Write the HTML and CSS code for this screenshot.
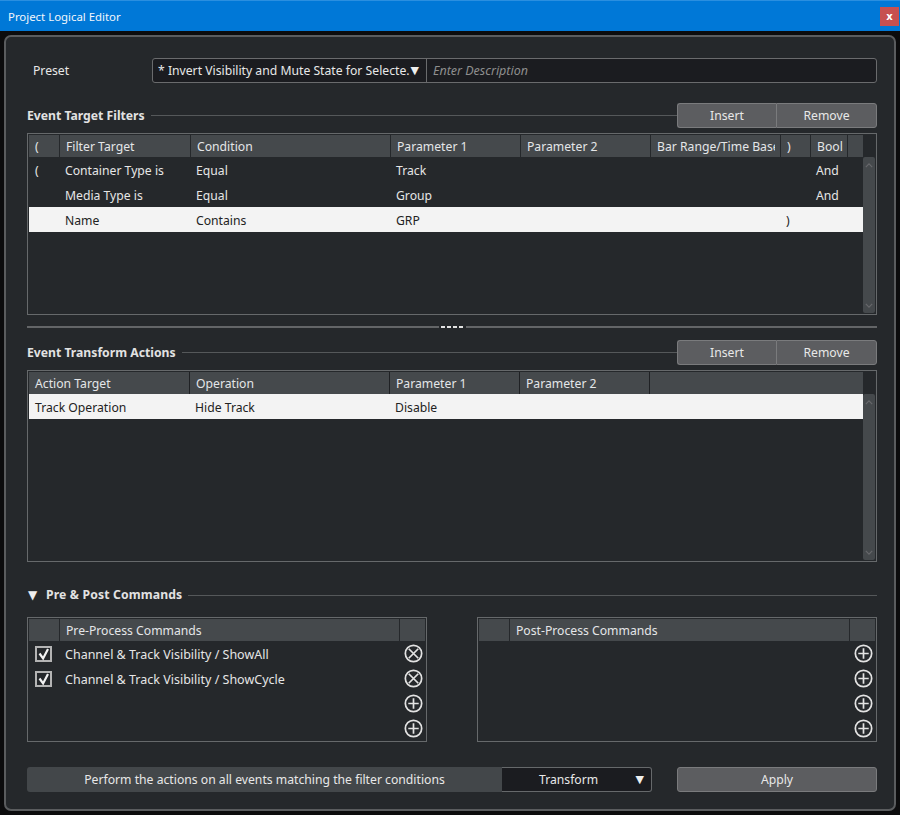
FILE: index.html
```html
<!DOCTYPE html>
<html lang="en">
<head>
<meta charset="utf-8">
<title>Project Logical Editor</title>
<link rel="stylesheet" href="styles.css">
</head>
<body>
<svg class="defs" width="0" height="0" aria-hidden="true">
  <symbol id="i-add" viewBox="0 0 20 20"><circle cx="10" cy="10" r="8.6" fill="none" stroke="currentColor" stroke-width="1.8"/><path d="M10 4.5v11M4.5 10h11" fill="none" stroke="currentColor" stroke-width="1.8"/></symbol>
  <symbol id="i-del" viewBox="0 0 20 20"><circle cx="10" cy="10" r="8.6" fill="none" stroke="currentColor" stroke-width="1.8"/><path d="M5 5l10 10M15 5L5 15" fill="none" stroke="currentColor" stroke-width="1.8"/></symbol>
  <symbol id="i-check" viewBox="0 0 17 16"><rect x="1" y="1" width="15" height="14" fill="none" stroke="#b4b4b4" stroke-width="2"/><path d="M4.5 7.5l3.6 5L13 3" fill="none" stroke="#f2f2f2" stroke-width="2.2"/></symbol>
</svg>
<header class="titlebar">
  <span class="title">Project Logical Editor</span>
  <button class="close">x</button>
</header>
<main class="panel">
  <div class="preset">
    <span class="preset-label">Preset</span>
    <div class="field">
      <div class="combo"><span>* Invert Visibility and Mute State for Selecte.</span><span class="arrow">▼</span></div>
      <div class="desc">Enter Description</div>
    </div>
  </div>

  <div class="sec sec-first">
    <span class="sec-title">Event Target Filters</span><span class="sec-line"></span>
    <div class="btns"><button class="btn btn-a">Insert</button><button class="btn btn-b">Remove</button></div>
  </div>
  <section class="table t-filter">
    <div class="tbody">
      <div class="grid g-filter head">
        <div>(</div><div>Filter Target</div><div>Condition</div><div>Parameter 1</div><div>Parameter 2</div><div class="clip"><span>Bar Range/Time Base</span></div><div>)</div><div>Bool</div><div></div>
      </div>
      <div class="grid g-filter row">
        <div>(</div><div>Container Type is</div><div>Equal</div><div>Track</div><div></div><div></div><div></div><div>And</div><div></div>
      </div>
      <div class="grid g-filter row">
        <div></div><div>Media Type is</div><div>Equal</div><div>Group</div><div></div><div></div><div></div><div>And</div><div></div>
      </div>
      <div class="grid g-filter row sel">
        <div></div><div>Name</div><div>Contains</div><div>GRP</div><div></div><div></div><div>)</div><div></div><div></div>
      </div>
    </div>
    <div class="scroll"><svg class="chev" viewBox="0 0 10 6"><path d="M1 5l4-4 4 4" fill="none" stroke="currentColor" stroke-width="1.4"/></svg><svg class="chev" viewBox="0 0 10 6"><path d="M1 1l4 4 4-4" fill="none" stroke="currentColor" stroke-width="1.4"/></svg></div>
  </section>

  <div class="split"><span class="split-line"></span><span class="dashes"><i></i><i></i><i></i><i></i></span><span class="split-line"></span></div>

  <div class="sec sec-second">
    <span class="sec-title">Event Transform Actions</span><span class="sec-line"></span>
    <div class="btns"><button class="btn btn-a">Insert</button><button class="btn btn-b">Remove</button></div>
  </div>
  <section class="table t-action">
    <div class="tbody">
      <div class="grid g-action head dark">
        <div>Action Target</div><div>Operation</div><div>Parameter 1</div><div>Parameter 2</div><div></div>
      </div>
      <div class="grid g-action row sel">
        <div>Track Operation</div><div>Hide Track</div><div>Disable</div><div></div><div></div>
      </div>
    </div>
    <div class="scroll"><svg class="chev" viewBox="0 0 10 6"><path d="M1 5l4-4 4 4" fill="none" stroke="currentColor" stroke-width="1.4"/></svg><svg class="chev" viewBox="0 0 10 6"><path d="M1 1l4 4 4-4" fill="none" stroke="currentColor" stroke-width="1.4"/></svg></div>
  </section>

  <div class="sec sec-third">
    <span class="tri">▼</span><span class="sec-title sec-title-up">Pre &amp; Post Commands</span><span class="sec-line"></span>
  </div>
  <div class="cmds">
    <section class="table t-cmd">
      <div class="tbody">
        <div class="grid g-cmd head"><div></div><div>Pre-Process Commands</div><div></div></div>
        <div class="grid g-cmd row"><div class="chk"><svg class="check"><use href="#i-check"/></svg></div><div>Channel &amp; Track Visibility / ShowAll</div><div class="act"><svg class="ico"><use href="#i-del"/></svg></div></div>
        <div class="grid g-cmd row"><div class="chk"><svg class="check"><use href="#i-check"/></svg></div><div>Channel &amp; Track Visibility / ShowCycle</div><div class="act"><svg class="ico"><use href="#i-del"/></svg></div></div>
        <div class="grid g-cmd row"><div></div><div></div><div class="act"><svg class="ico"><use href="#i-add"/></svg></div></div>
        <div class="grid g-cmd row"><div></div><div></div><div class="act"><svg class="ico"><use href="#i-add"/></svg></div></div>
      </div>
    </section>
    <section class="table t-cmd">
      <div class="tbody">
        <div class="grid g-cmd head"><div></div><div>Post-Process Commands</div><div></div></div>
        <div class="grid g-cmd row"><div></div><div></div><div class="act"><svg class="ico"><use href="#i-add"/></svg></div></div>
        <div class="grid g-cmd row"><div></div><div></div><div class="act"><svg class="ico"><use href="#i-add"/></svg></div></div>
        <div class="grid g-cmd row"><div></div><div></div><div class="act"><svg class="ico"><use href="#i-add"/></svg></div></div>
        <div class="grid g-cmd row"><div></div><div></div><div class="act"><svg class="ico"><use href="#i-add"/></svg></div></div>
      </div>
    </section>
  </div>

  <footer class="foot">
    <div class="perform">Perform the actions on all events matching the filter conditions</div>
    <div class="mode"><span>Transform</span><span class="arrow mode-arrow">▼</span></div>
    <button class="btn apply">Apply</button>
  </footer>
</main>
</body>
</html>
```
FILE: styles.css
```css
* { box-sizing: border-box; }
html, body { margin: 0; height: 815px; overflow: hidden; }
body {
  background: #0c0c0d;
  color: #e8e8e8;
  font: 12.2px/17px "Noto Sans", "Open Sans", sans-serif;
}
.defs { position: absolute; }
.titlebar {
  height: 31px;
  background: #0078d7;
  border-top: 1px solid #2a8fe0;
  display: flex;
  align-items: center;
  justify-content: space-between;
  padding: 0 1px 0 8px;
  color: #f2f6fb;
}
.title { font-size: 11.4px; }
.close {
  width: 19px; height: 19px;
  margin-top: 1px;
  border: 0; padding: 0;
  background: #c75050;
  color: #fff;
  font: 700 10px/17px "DejaVu Sans", sans-serif;
}
.panel {
  height: 776px;
  margin: 4px 4px 0 4px;
  background: #25282b;
  border: 2px solid #5a5c5e;
  border-radius: 7px;
  padding: 21px 17px 0 21px;
}
.preset { display: flex; height: 25px; align-items: center; }
.preset-label { width: 125px; padding-left: 6px; }
.field {
  flex: 1; height: 25px; display: flex;
  background: #1b1c20;
  border: 1px solid #6a6b6d;
  border-radius: 3px;
}
.combo {
  width: 274px;
  border-right: 1px solid #6a6b6d;
  padding: 0 7px 0 5px;
  display: flex; align-items: center; justify-content: space-between;
  white-space: nowrap; overflow: hidden;
}
.arrow { font: 11px/1 "DejaVu Sans", sans-serif; color: #eee; }
.desc {
  flex: 1; padding-left: 6px;
  font-size: 12.5px;
  font-style: italic; color: #8e8e8e; line-height: 23px;
}
.sec { display: flex; align-items: center; height: 25px; }
.sec-first { margin-top: 20px; }
.sec-second { margin-top: 12px; }
.sec-third { margin-top: 21px; }
.sec-title { font-weight: 700; color: #e2e2e2; white-space: nowrap; }
.sec-title-up { padding-bottom: 2px; letter-spacing: 0.15px; }
.sec-line { flex: 1; height: 1px; background: #55585a; margin-left: 6px; }
.tri { font: 12px/1 "DejaVu Sans", sans-serif; color: #eee; width: 19px; padding-left: 1px; padding-bottom: 2px; }
.btns { display: flex; width: 200px; }
.btn {
  height: 25px;
  background: #5c5d60;
  border: 1px solid #7a7b7d;
  color: #e8e8e8;
  font: inherit;
  padding: 0;
}
.btn-a { width: 99px; border-radius: 3px 0 0 3px; border-right: 0; }
.btn-b { width: 101px; border-radius: 0 3px 3px 0; }
.table {
  margin-top: 5px;
  border: 1px solid #66696b;
  padding: 1px;
  display: flex;
}
.t-filter { height: 182px; }
.t-action { height: 192px; }
.t-cmd { height: 125px; width: 400px; margin-top: 0; }
.tbody { flex: 1; min-width: 0; }
.grid { display: grid; }
.g-filter { grid-template-columns: 31px 131px 200px 130px 130px 130px 30px 37px 15px; }
.g-action { grid-template-columns: 161px 200px 130px 130px 213px; }
.g-cmd { grid-template-columns: 31px 340px 25px; }
.head { height: 22px; background: #25282b; }
.head > div {
  background: #45494c;
  line-height: 24px;
  padding-left: 6px;
  margin-right: 1px;
  color: #e4e6e8;
  white-space: nowrap;
  overflow: hidden;
}
.head > div:last-child { margin-right: 0; }
.head .clip span { display: block; width: 118px; overflow: hidden; }
.dark { background: #1f2124; }
.row { height: 25px; line-height: 27px; }
.row > div { padding-left: 6px; white-space: nowrap; color: #e6e6e6; }
.g-filter.row > div:nth-child(n+2) { padding-left: 5px; }
.g-action.row > div:nth-child(n+2) { padding-left: 5px; }
.sel { background: #f3f3f3; }
.row.sel > div { color: #222; }
.row .chk { padding: 5px 0 0 6px; line-height: 0; }
.g-cmd.row > div:nth-child(2) { padding-left: 5px; font-size: 12.5px; }
.row .act { padding: 3px 0 0 4px; line-height: 0; color: #e2e2e2; }
.check { width: 17px; height: 16px; }
.ico { width: 19px; height: 19px; }
.scroll {
  width: 12px;
  margin-top: 22px;
  background: #45494c;
  border-radius: 2px;
  display: flex; flex-direction: column; justify-content: space-between;
  align-items: center;
  padding: 6px 0 5px;
  color: #68696c;
}
.chev { width: 8px; height: 5px; }
.split { display: flex; align-items: center; height: 2px; margin-top: 11px; }
.split-line { flex: 1; height: 2px; background: #636567; }
.dashes { display: flex; gap: 2px; padding: 0 2px; width: 27px; }
.dashes i { width: 4px; height: 2px; background: #e2e2e2; }
.cmds { display: flex; justify-content: space-between; margin-top: 9px; }
.foot { display: flex; margin-top: 25px; height: 25px; }
.perform {
  width: 475px;
  background: #43474a;
  border-radius: 3px 0 0 3px;
  text-align: center;
  line-height: 25px;
}
.mode {
  width: 150px;
  background: #1b1c20;
  border: 1px solid #66696b;
  border-left: 0;
  border-radius: 0 3px 3px 0;
  display: flex; align-items: center; justify-content: space-between;
  padding: 0 7px 0 37px;
}
.apply { width: 200px; margin-left: 25px; border-radius: 3px; }
```
